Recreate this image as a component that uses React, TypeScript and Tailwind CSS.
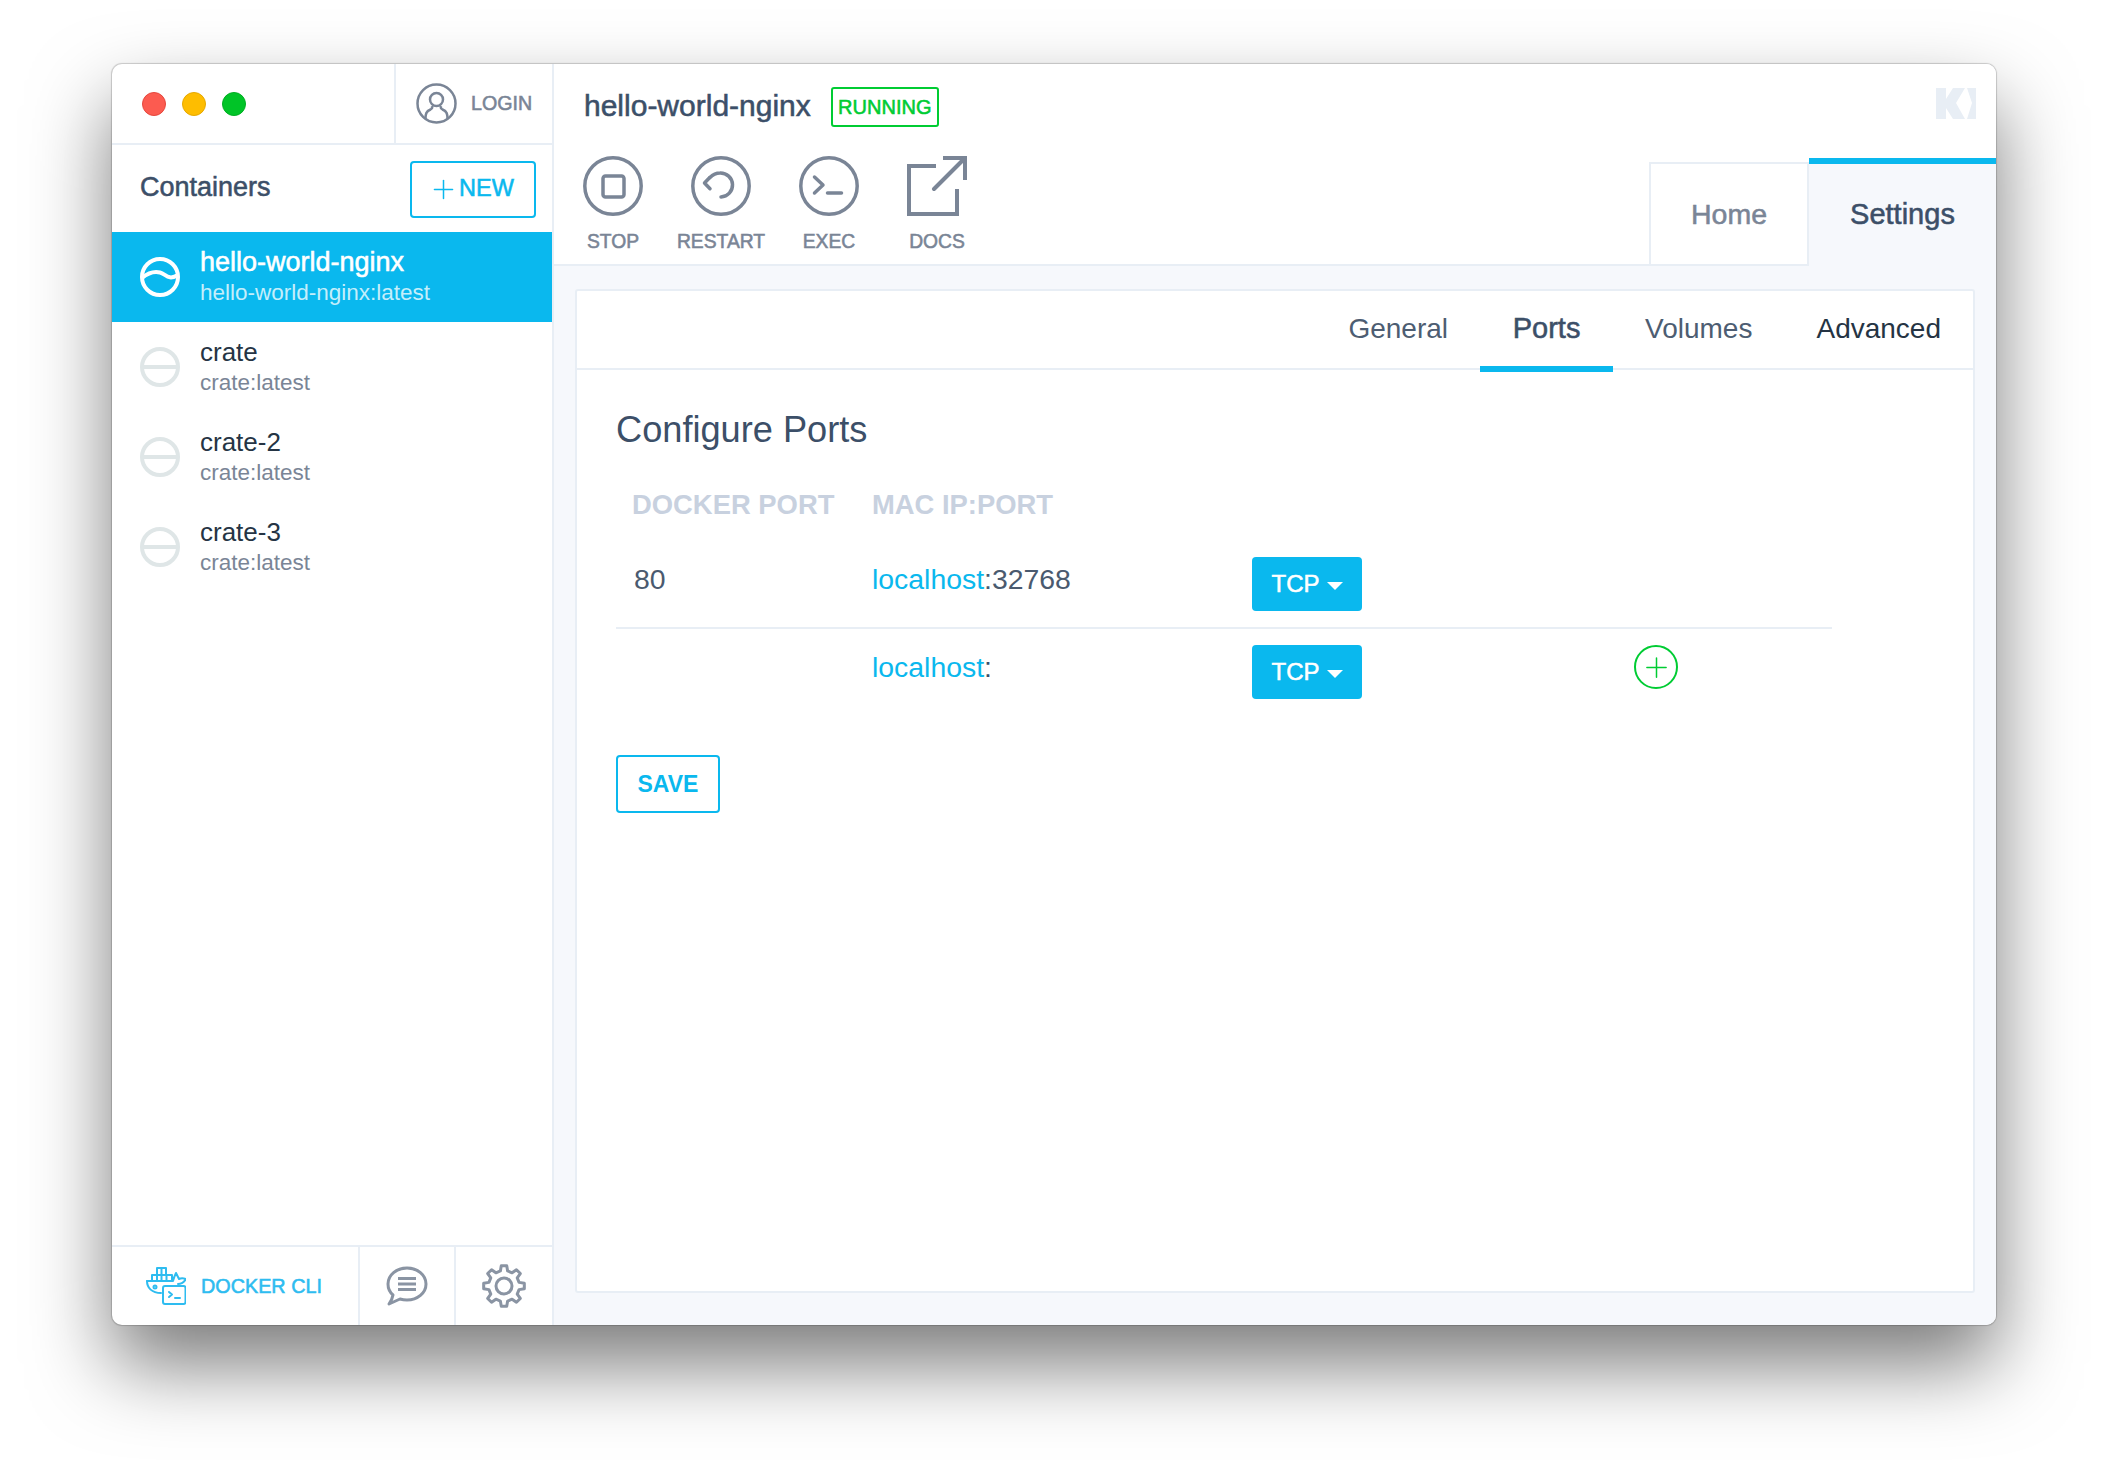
import { Plus } from 'lucide-react';

const medium = '[-webkit-text-stroke:0.55px]';

const containers = [
  { name: 'hello-world-nginx', image: 'hello-world-nginx:latest', active: true },
  { name: 'crate', image: 'crate:latest' },
  { name: 'crate-2', image: 'crate:latest' },
  { name: 'crate-3', image: 'crate:latest' },
];

function gearPath(cx: number, cy: number, outer: number, inner: number, teeth: number) {
  const pts: string[] = [];
  const step = (Math.PI * 2) / teeth;
  for (let i = 0; i < teeth; i++) {
    const a = i * step - Math.PI / 2;
    const corners: [number, number][] = [
      [inner, a - step * 0.3],
      [outer, a - step * 0.17],
      [outer, a + step * 0.17],
      [inner, a + step * 0.3],
    ];
    corners.forEach(([r, t]) => {
      pts.push(`${(cx + r * Math.cos(t)).toFixed(2)} ${(cy + r * Math.sin(t)).toFixed(2)}`);
    });
  }
  return `M${pts.join('L')}Z`;
}

function StatusIcon({ active }: { active?: boolean }) {
  return (
    <svg width="40" height="40" viewBox="0 0 40 40" fill="none" stroke={active ? '#fff' : '#dfe6e7'} strokeWidth="4">
      <circle cx="20" cy="20" r="18" />
      {active ? <path d="M2 21C8 16 14 14 20 15.5C26 17 28 24 38 18" /> : <path d="M2 20H38" />}
    </svg>
  );
}

function ActionIcon({ name }: { name: string }) {
  if (name === 'DOCS') {
    return (
      <svg width="60" height="60" viewBox="0 0 60 60" fill="none" stroke="#7a8596" strokeWidth="4">
        <path d="M29 10H2V58H50V33" />
        <path d="M36 2H58V24" />
        <path d="M58 2L27 33" strokeLinecap="round" />
      </svg>
    );
  }
  return (
    <svg width="60" height="60" viewBox="0 0 60 60" fill="none" stroke="#7a8596" strokeWidth="3.5" strokeLinecap="round" strokeLinejoin="round">
      <circle cx="30" cy="30" r="28.2" />
      {name === 'STOP' && <rect x="20" y="20" width="21" height="21" rx="2.5" />}
      {name === 'RESTART' && (
        <>
          <path d="M19 21.5C22 18.5 25 17 29 17A12 12 0 0 1 30 41" />
          <path d="M18.5 21.7L13.5 27L19 32.7" />
        </>
      )}
      {name === 'EXEC' && (
        <>
          <path d="M15.5 21L24 29L15.5 37" />
          <path d="M28.5 37H42.5" />
        </>
      )}
    </svg>
  );
}

function DockerIcon() {
  return (
    <svg width="40" height="38" viewBox="0 0 40 38" fill="none" stroke="#2ebcf0" strokeWidth="2" strokeLinejoin="round" strokeLinecap="round">
      <path d="M11 8V1H20V8" />
      <path d="M6 14V8H26V14" />
      <path d="M11 8V14M15.5 1V14M20.5 8V14" />
      <path d="M1 14H27C28 10 29 8 30 6C31 8 32 10 33 12C35 11 37 11 40 12C38 15 35 17 32 17" />
      <path d="M1 14C1 21 6 26 15 26" />
      <circle cx="9" cy="20" r="1.5" />
      <rect x="17" y="19" width="22.5" height="18" rx="2" />
      <path d="M23 25L26 27.5L23 30M29 31H34" />
    </svg>
  );
}

function Logo() {
  return (
    <svg width="40" height="31" viewBox="0 0 40 31" fill="#e8eef5">
      <path d="M0 0H10V11L17 0H29L20 15L29 31H17L10 20V31H0Z" />
      <path d="M31 0H40V31H31L36 15Z" />
    </svg>
  );
}

function Caret() {
  return <span className="ml-[7px] mt-[4px] w-0 h-0 border-x-[8px] border-x-transparent border-t-[8px] border-t-white" />;
}

function TcpButton() {
  return (
    <button className={`flex items-center justify-center w-[110px] h-[54px] rounded-[4px] bg-[#0ab8ee] text-white text-[24px] ${medium}`}>
      TCP
      <Caret />
    </button>
  );
}

export default function App() {
  return (
    <div className="w-[2108px] h-[1484px] bg-white pl-[112px] pt-[64px] overflow-hidden [font-family:'Liberation_Sans',sans-serif]">
      <div className="flex w-[1884px] h-[1261px] rounded-[10px] overflow-hidden bg-white shadow-[0_40px_80px_rgba(0,0,0,0.52),0_0_1px_1px_rgba(0,0,0,0.18)]">
        {/* sidebar */}
        <aside className="flex flex-col w-[442px] shrink-0 border-r-2 border-[#e8eef5]">
          <div className="flex h-[81px] border-b-2 border-[#e8eef5]">
            <div className="flex items-center gap-4 w-[282px] pl-[30px] pt-[1px]">
              <span className="w-6 h-6 rounded-full bg-[#fc5b50] border border-[#e5473d]" />
              <span className="w-6 h-6 rounded-full bg-[#febd00] border border-[#e6a800]" />
              <span className="w-6 h-6 rounded-full bg-[#00c427] border border-[#00ae22]" />
            </div>
            <div className="flex items-center flex-1 border-l-2 border-[#e8eef5] pl-[20px]">
              <svg width="41" height="41" viewBox="0 0 41 41" fill="none" stroke="#7a8596" strokeWidth="2.5">
                <circle cx="20.5" cy="20.5" r="19" />
                <circle cx="20.5" cy="16.5" r="6.5" />
                <path d="M9.5 36C9.5 31 10 28.5 14.5 26.5C16.5 25.5 16.5 24.5 16 23M31.5 36C31.5 31 31 28.5 26.5 26.5C24.5 25.5 24.5 24.5 25 23" />
              </svg>
              <span className={`ml-[14px] mt-[1px] text-[19.7px] text-[#7a8596] ${medium}`}>LOGIN</span>
            </div>
          </div>

          <div className="flex items-center justify-between h-[87px] pl-[28px] pr-[16px]">
            <h2 className={`text-[27px] -mt-[2px] text-[#3c4f68] ${medium}`}>Containers</h2>
            <button className="flex items-center justify-center w-[126px] h-[57px] mt-[1px] pr-[4px] border-2 border-[#0ab8ee] rounded-[4px] text-[#0ab8ee]">
              <Plus size={31} strokeWidth={1.5} absoluteStrokeWidth />
              <span className={`text-[23.5px] ${medium}`}>NEW</span>
            </button>
          </div>

          <div className="flex-1">
            {containers.map((c) => (
              <div key={c.name} className={`flex items-center h-[90px] pl-[28px] ${c.active ? 'bg-[#0ab8ee]' : ''}`}>
                <StatusIcon active={c.active} />
                <div className="ml-[20px] flex flex-col">
                  <span className={c.active ? `-mt-[1px] mb-[1px] text-[27px] leading-[32px] text-white ${medium}` : '-mt-[1px] mb-[1px] text-[26px] leading-[32px] text-[#253444]'}>{c.name}</span>
                  <span className={`text-[22.5px] leading-[28px] ${c.active ? 'text-[#c4eefb]' : 'text-[#7a8596]'}`}>{c.image}</span>
                </div>
              </div>
            ))}
          </div>

          <div className="flex h-[80px] border-t-2 border-[#e8eef5]">
            <div className="flex items-center w-[246px] pl-[34px]">
              <DockerIcon />
              <span className={`ml-[15px] mt-[2px] text-[19.8px] text-[#2ebcf0] ${medium}`}>DOCKER CLI</span>
            </div>
            <div className="flex items-center justify-center w-[96px] border-l-2 border-[#e8eef5]">
              <svg width="42" height="40" viewBox="0 0 42 40" fill="none" stroke="#8a94a3" strokeWidth="3">
                <path d="M21 2C31.5 2 40 9 40 18C40 27 31.5 34 21 34C18.5 34 16 33.6 14 33L3 38C5 35 6.5 32.5 7 29C3.5 26 2 22 2 18C2 9 10.5 2 21 2Z" strokeLinejoin="round" />
                <path d="M12 12.5H30M12 18H30M12 23.5H30" />
              </svg>
            </div>
            <div className="flex items-center justify-center flex-1 border-l-2 border-[#e8eef5]">
              <svg width="44" height="44" viewBox="0 0 44 44" fill="none" stroke="#8a94a3" strokeWidth="3" strokeLinejoin="round">
                <path d={gearPath(22, 22, 20.5, 15.5, 8)} />
                <circle cx="22" cy="22" r="8" />
              </svg>
            </div>
          </div>
        </aside>

        {/* main */}
        <main className="flex flex-col flex-1 bg-[#f6f8fc]">
          <header className="flex justify-between h-[202px] bg-white border-b-2 border-[#e8eef5]">
            <div className="flex flex-col pl-[5px]">
              <div className="flex items-center h-[84px] pl-[25px]">
                <h1 className={`text-[30px] text-[#3c4f68] -mt-[1px] ${medium}`}>hello-world-nginx</h1>
                <span className={`flex items-center justify-center ml-[20px] mt-[2px] w-[108px] h-[40px] border-2 border-[#00cc33] rounded-[3px] text-[20px] text-[#00cc33] ${medium}`}>RUNNING</span>
              </div>
              <div className="flex mt-[8px]">
                {['STOP', 'RESTART', 'EXEC', 'DOCS'].map((name) => (
                  <div key={name} className="flex flex-col items-center w-[108px]">
                    <ActionIcon name={name} />
                    <span className={`mt-[13px] text-[19.3px] leading-[26px] text-[#7a8596] ${medium}`}>{name}</span>
                  </div>
                ))}
              </div>
            </div>
            <div className="flex flex-col items-end justify-between">
              <div className="pt-[24px] pr-[20px]">
                <Logo />
              </div>
              <div className="flex items-end -mb-[2px]">
                <div className="flex items-center justify-center w-[160px] h-[104px] border-2 border-[#e8eef5] text-[28.5px] text-[#7a8596] bg-white">
                  <span className={medium}>Home</span>
                </div>
                <div className="flex items-center justify-center w-[187px] h-[108px] pb-[1px] border-t-[6px] border-[#0ab8ee] bg-[#f6f8fc] text-[29px] text-[#3c4f68]">
                  <span className={medium}>Settings</span>
                </div>
              </div>
            </div>
          </header>

          <div className="flex flex-1 px-[21px] pt-[23px] pb-[32px]">
            <section className="flex-1 bg-white border-2 border-[#e8eef5] rounded-[3px]">
              <nav className="flex justify-end h-[79px] border-b-2 border-[#e8eef5]">
                <span className="flex items-center h-[81px] px-[32px] pb-[6px] text-[28px] text-[#4d5d72]">General</span>
                <span className={`flex items-center justify-center w-[133px] h-[81px] border-b-[6px] border-[#0ab8ee] text-[29px] text-[#3c4f68] ${medium}`}>Ports</span>
                <span className="flex items-center h-[81px] px-[32px] pb-[6px] text-[28px] text-[#4d5d72]">Volumes</span>
                <span className="flex items-center h-[81px] px-[32px] pb-[6px] text-[28px] text-[#253444]">Advanced</span>
              </nav>

              <div className="pl-[39px] pt-[38px]">
                <h3 className="text-[36.2px] leading-[44px] text-[#3c4f68]">Configure Ports</h3>

                <div className="w-[1216px] mt-[32px]">
                  <div className="grid grid-cols-[256px_380px_382px_1fr] h-[40px] items-center text-[27.4px] font-bold text-[#c8d1df]">
                    <span className="pl-[16px] whitespace-nowrap">DOCKER PORT</span>
                    <span className="whitespace-nowrap">MAC IP:PORT</span>
                  </div>
                  <div className="grid grid-cols-[256px_380px_382px_1fr] h-[105px] border-b-2 border-[#e8eef5] text-[28.4px] leading-[40px] text-[#4a5a6f]">
                    <span className="pl-[18px] mt-[35px]">80</span>
                    <span className="mt-[35px]"><span className="text-[#0ab8ee]">localhost</span>:32768</span>
                    <div className="mt-[33px]"><TcpButton /></div>
                  </div>
                  <div className="grid grid-cols-[256px_380px_382px_1fr] h-[126px] text-[28.4px] leading-[40px] text-[#4a5a6f]">
                    <span />
                    <span className="mt-[18px] text-[#0ab8ee]">localhost<span className="text-[#3c4f68]">:</span></span>
                    <div className="mt-[16px]"><TcpButton /></div>
                    <div className="mt-[16px]">
                      <span className="flex items-center justify-center w-[44px] h-[44px] border-2 border-[#00cc33] rounded-full text-[#00cc33]">
                        <Plus size={33} strokeWidth={1.5} absoluteStrokeWidth />
                      </span>
                    </div>
                  </div>
                </div>

                <button className="w-[104px] h-[58px] border-2 border-[#0ab8ee] rounded-[4px] text-[23px] text-[#0ab8ee] font-bold">SAVE</button>
              </div>
            </section>
          </div>
        </main>
      </div>
    </div>
  );
}
